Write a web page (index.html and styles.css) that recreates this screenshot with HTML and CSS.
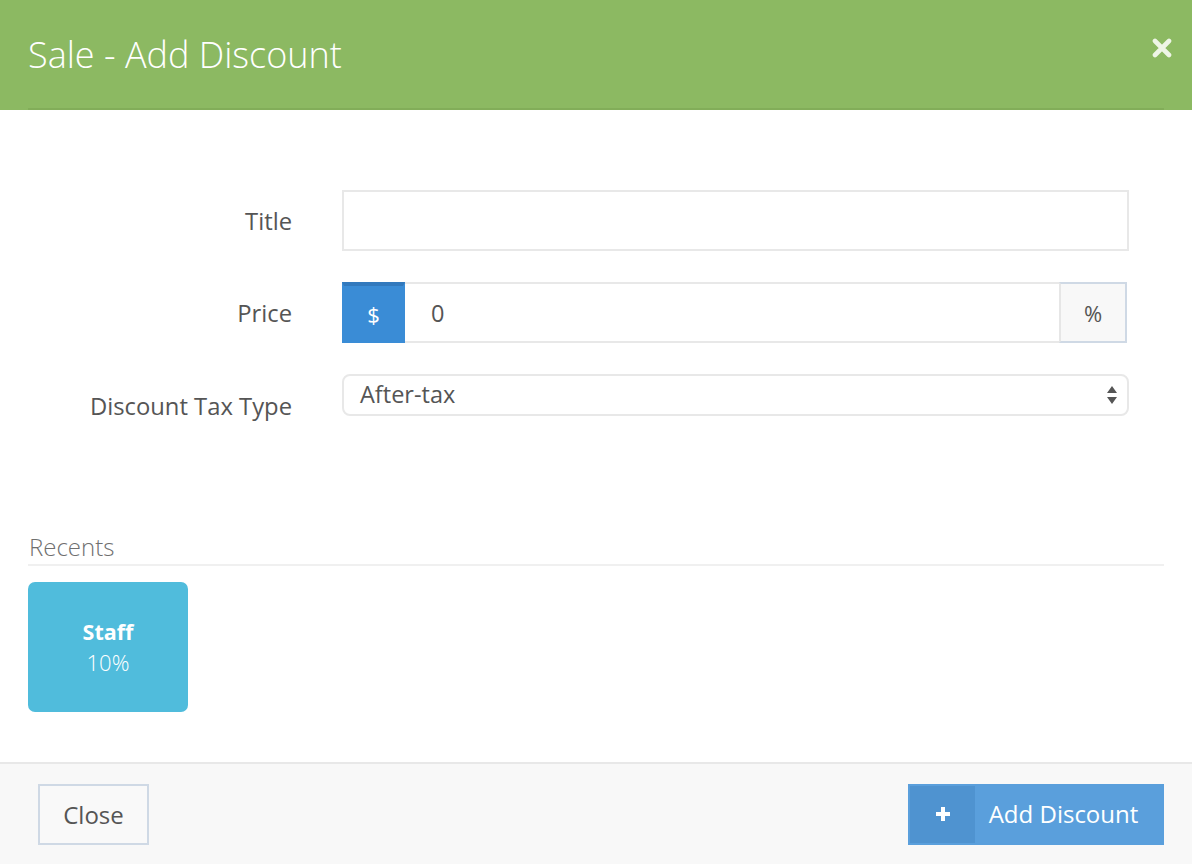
FILE: index.html
```html
<!DOCTYPE html>
<html>
<head>
<meta charset="utf-8">
<link rel="stylesheet" href="styles.css">
</head>
<body>
<div class="modal">
  <div class="header">
    <div class="header-inner">
      <h1 class="title">Sale - Add Discount</h1>
      <span class="close-x">
        <svg width="20" height="20" viewBox="0 0 20 20"><path d="M3 3 L17 17 M17 3 L3 17" stroke="#eef5e6" stroke-width="4.6" stroke-linecap="round"/></svg>
      </span>
    </div>
  </div>
  <div class="body">
    <form class="form">
      <div class="row">
        <label class="label">Title</label>
        <div class="field"><input class="input" type="text"></div>
      </div>
      <div class="row">
        <label class="label">Price</label>
        <div class="field group">
          <span class="addon addon-on">$</span>
          <input class="input input-mid" type="text" value="0">
          <span class="addon addon-off">%</span>
        </div>
      </div>
      <div class="row">
        <label class="label">Discount Tax Type</label>
        <div class="field">
          <div class="select">
            <span>After-tax</span>
            <svg class="arrows" width="10" height="20" viewBox="0 0 10 20"><path d="M5 1 L10 8 L0 8 Z M0 12 L10 12 L5 19 Z" fill="#555"/></svg>
          </div>
        </div>
      </div>
    </form>
    <div class="recents">
      <div class="recents-title">Recents</div>
      <div class="tiles">
        <div class="tile">
          <div class="tile-name">Staff</div>
          <div class="tile-val">10%</div>
        </div>
      </div>
    </div>
  </div>
  <div class="footer">
    <button class="btn-close" type="button">Close</button>
    <button class="btn-add" type="button">
      <span class="btn-icon"><svg width="18" height="18" viewBox="0 0 18 18"><path d="M9 2 V16 M2 9 H16" stroke="#fff" stroke-width="4"/></svg></span>
      <span class="btn-text">Add Discount</span>
    </button>
  </div>
</div>
</body>
</html>
```
FILE: styles.css
```css
html, body {
  margin: 0;
  padding: 0;
  background: #fff;
  font-family: "Open Sans", "Liberation Sans", sans-serif;
}
.modal {
  width: 1192px;
  height: 864px;
  display: flex;
  flex-direction: column;
}
.header {
  background: #8cb962;
  padding: 0 28px;
  height: 110px;
  box-sizing: border-box;
}
.header-inner {
  height: 110px;
  box-sizing: border-box;
  border-bottom: 2px solid #82ad59;
  display: flex;
  align-items: center;
  justify-content: space-between;
}
.title {
  margin: 0;
  font-weight: 300;
  font-size: 36px;
  color: #fff;
}
.close-x {
  display: flex;
  margin-right: -8px;
  margin-top: -12px;
}
.body {
  flex: 1;
  padding: 0 28px;
}
.form {
  padding-top: 80px;
  display: flex;
  flex-direction: column;
  gap: 31px;
}
.row {
  display: flex;
  align-items: center;
  height: 61px;
}
.label {
  width: 292px;
  flex: none;
  text-align: right;
  font-size: 23.8px;
  color: #555;
  box-sizing: border-box;
  margin-left: -28px;
}
.row:last-child {
  height: 42px;
}
.row:last-child .label {
  padding-top: 22px;
}
.field {
  margin-left: 50px;
  width: 787px;
  height: 100%;
}
.input {
  width: 100%;
  height: 100%;
  box-sizing: border-box;
  border: 2px solid #e8e8e8;
  font-family: inherit;
  font-size: 23.5px;
  color: #555;
  padding: 0 23px;
  outline: none;
  background: #fff;
}
.group {
  display: flex;
  width: 785px;
}
.addon {
  flex: none;
  display: flex;
  align-items: center;
  justify-content: center;
  box-sizing: border-box;
  font-size: 22px;
}
.addon-on {
  width: 63px;
  background: #3a8cd6;
  color: #fff;
  border: 2px solid #3a8cd6;
  border-top: 4px solid #3279bd;
}
.addon-off {
  width: 68px;
  background: #f8f8f8;
  color: #555;
  border: 2px solid #cfd9e5;
  border-left: 2px solid #e6e6e6;
}
.input-mid {
  flex: 1;
  width: auto;
  border-left: none;
  border-right: none;
  padding-left: 26px;
}
.select {
  height: 42px;
  box-sizing: border-box;
  border: 2px solid #e8e8e8;
  border-radius: 8px;
  display: flex;
  align-items: center;
  justify-content: space-between;
  padding: 0 10px 0 16px;
  font-size: 23.5px;
  color: #555;
}
.select span {
  margin-top: -2px;
}
.recents {
  margin-top: 114px;
}
.recents-title {
  font-size: 24px;
  font-weight: 300;
  color: #6f6f6f;
  padding-left: 1px;
  padding-bottom: 1px;
  border-bottom: 2px solid #f0f0f0;
}
.tiles {
  display: flex;
  padding-top: 16px;
}
.tile {
  width: 160px;
  height: 130px;
  background: #50bcdc;
  border-radius: 7px;
  color: #fff;
  display: flex;
  flex-direction: column;
  align-items: center;
  justify-content: center;
  font-size: 22px;
  line-height: 30px;
}
.tile-name {
  font-weight: 700;
  font-size: 21.5px;
}
.tile-val {
  font-weight: 300;
}
.footer {
  height: 102px;
  box-sizing: border-box;
  background: #f8f8f8;
  border-top: 2px solid #e8e8e8;
  display: flex;
  align-items: center;
  justify-content: space-between;
  padding: 0 28px 0 38px;
}
.btn-close {
  width: 111px;
  height: 61px;
  box-sizing: border-box;
  border: 2px solid #cfd9e5;
  background: #f9f9f9;
  font-family: inherit;
  font-size: 24px;
  color: #555;
  padding: 0;
  cursor: pointer;
}
.btn-add {
  width: 256px;
  height: 61px;
  box-sizing: border-box;
  background: #5a9fdc;
  border: 2px solid #5a9fdc;
  display: flex;
  align-items: stretch;
  padding: 0;
  font-family: inherit;
  cursor: pointer;
}
.btn-icon {
  width: 65px;
  background: #4f93d0;
  display: flex;
  align-items: center;
  justify-content: center;
}
.btn-text {
  flex: 1;
  display: flex;
  align-items: center;
  justify-content: center;
  font-size: 24px;
  color: #fff;
  padding-right: 10px;
  margin-top: -2px;
}
```
